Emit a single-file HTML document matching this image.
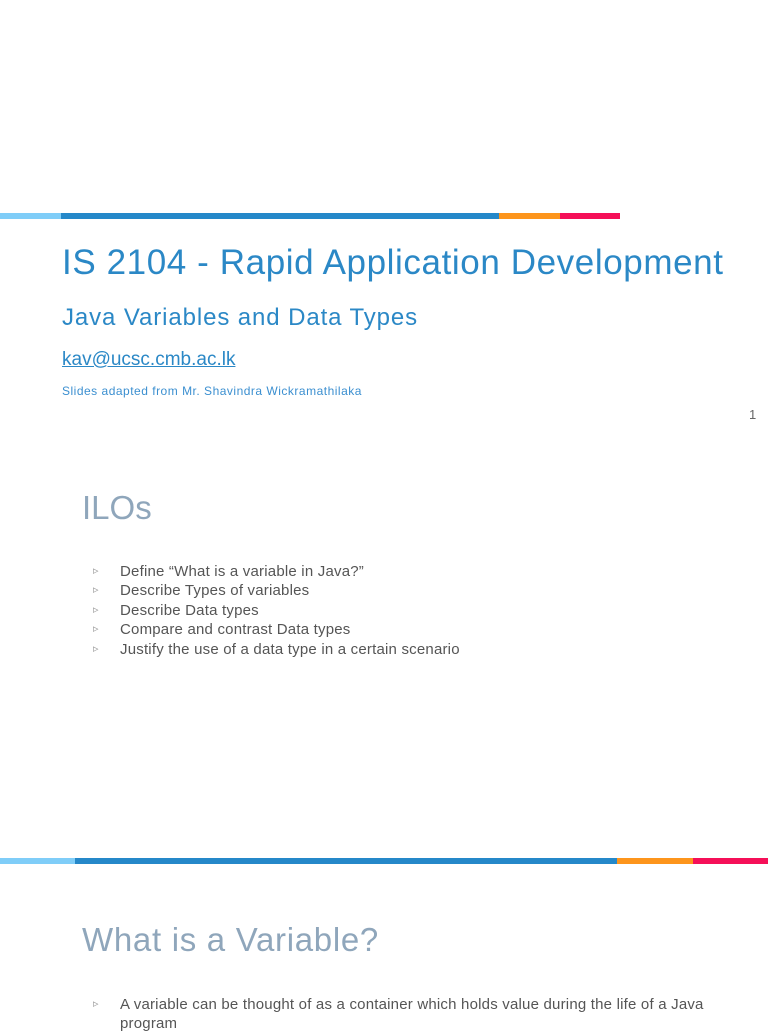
<!DOCTYPE html>
<html><head><meta charset="utf-8"><style>
body{margin:0;width:768px;height:1024px;background:#fff;position:relative;overflow:hidden;font-family:"Liberation Sans",sans-serif}
.b{position:absolute;height:6px}
.t{position:absolute;white-space:nowrap}
ul{position:absolute;margin:0;padding:0;list-style:none;color:#555;font-size:15px;letter-spacing:0.2px}
li{position:relative;padding-left:38px;height:19.4px;line-height:19px}
li:before{content:"▹";position:absolute;left:11px;color:#999;font-size:11px}
</style></head><body>
<div class="b" style="top:213px;left:0;width:61px;background:#7fcdf8"></div>
<div class="b" style="top:213px;left:61px;width:438px;background:#2588c9"></div>
<div class="b" style="top:213px;left:499px;width:61px;background:#fd951c"></div>
<div class="b" style="top:213px;left:560px;width:60px;background:#f50f58"></div>
<div class="t" style="top:243px;left:62px;font-size:35px;color:#2b88c6;letter-spacing:0.6px">IS 2104 - Rapid Application Development</div>
<div class="t" style="top:304px;left:62px;font-size:24px;color:#2b88c6;letter-spacing:0.9px">Java Variables and Data Types</div>
<div class="t" style="top:349px;left:62px;font-size:19px;color:#2b88c6;text-decoration:underline">kav@ucsc.cmb.ac.lk</div>
<div class="t" style="top:384px;left:62px;font-size:12px;color:#3b8fd0;letter-spacing:0.5px">Slides adapted from Mr. Shavindra Wickramathilaka</div>
<div class="t" style="top:407px;left:749px;font-size:13px;color:#666">1</div>
<div class="t" style="top:489px;left:82px;font-size:33px;color:#8fa6bb">ILOs</div>
<ul style="top:562px;left:82px">
<li>Define “What is a variable in Java?”</li>
<li>Describe Types of variables</li>
<li>Describe Data types</li>
<li>Compare and contrast Data types</li>
<li>Justify the use of a data type in a certain scenario</li>
</ul>
<div class="b" style="top:858px;left:0;width:75px;background:#7fcdf8"></div>
<div class="b" style="top:858px;left:75px;width:542px;background:#2588c9"></div>
<div class="b" style="top:858px;left:617px;width:76px;background:#fd951c"></div>
<div class="b" style="top:858px;left:693px;width:75px;background:#f50f58"></div>
<div class="t" style="top:921px;left:82px;font-size:33px;color:#8fa6bb;letter-spacing:0.7px">What is a Variable?</div>
<ul style="top:995px;left:82px;width:640px">
<li style="height:auto;white-space:normal">A variable can be thought of as a container which holds value during the life of a Java program</li>
</ul>
</body></html>
